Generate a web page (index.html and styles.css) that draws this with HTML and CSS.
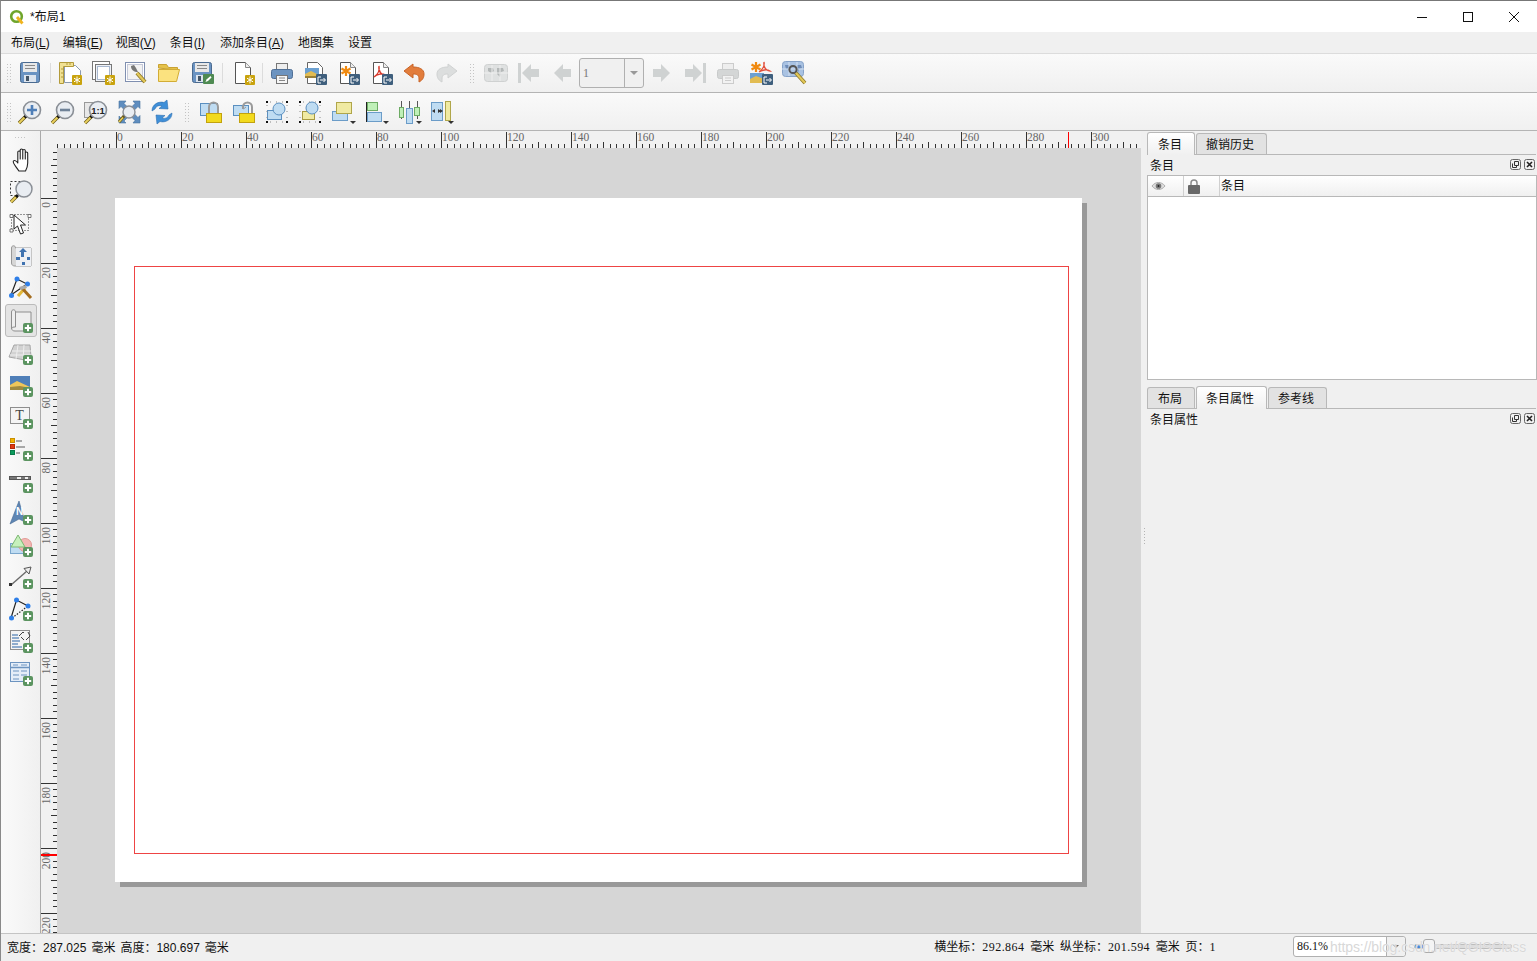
FILE: index.html
```html
<!DOCTYPE html>
<html lang="zh-CN">

<head>
    <meta charset="UTF-8">
    <title>*布局1</title>
    <link rel="stylesheet" href="styles.css">
</head>

<body>
    <svg class="defs" width="0" height="0">
        <!-- badges -->
        <symbol id="b-star" viewBox="0 0 26 26"><rect x="15" y="15" width="10" height="10" rx="1" fill="#c9a30e"/><path d="M20 16.5v7M17 18.2l6 3.6M23 18.2l-6 3.6" stroke="#fff" fill="none"/></symbol>
        <symbol id="b-export" viewBox="0 0 26 26"><rect x="14" y="14" width="11" height="11" rx="1" fill="#3f5f7d"/><path d="M19 17h-3v6h3M18 20h5M21.5 18l2 2-2 2" stroke="#fff" fill="none"/></symbol>
        <symbol id="b-plus" viewBox="0 0 26 26"><rect x="15" y="15" width="10" height="10" rx="2" fill="#5b9460"/><path d="M20 16.800v6.400M16.800 20h6.400" stroke="#fff" stroke-width="2"/></symbol>
        <symbol id="page" viewBox="0 0 26 26"><path d="M5.500 2.500h10l5 5v16h-15z" fill="#fff" stroke="#555"/><path d="M15.500 2.500v5h5" fill="#eee" stroke="#888"/></symbol>

        <!-- top toolbar -->
        <symbol id="i-save" viewBox="0 0 26 26"><rect x="3.500" y="2.500" width="19" height="20" rx="2" fill="#6a93c2" stroke="#4a6a8f"/><rect x="6" y="3" width="14" height="9" fill="#e8e8e8"/><path d="M8 5.500h10M8 8.500h10" stroke="#888"/><rect x="7" y="15" width="12" height="7" fill="#dce4ee"/><rect x="9" y="16" width="3" height="5" fill="#456"/></symbol>
        <symbol id="i-layout" viewBox="0 0 26 26"><path d="M7.500 5.500h11l5 5v12h-16z" fill="#fff" stroke="#8a9ab0"/><path d="M2.500 2.500h14v4h-10v17h-4z" fill="#f1e193" stroke="#b39b3b"/><path d="M4 9h2M4 13h2M4 17h2M10 3v2M13 3v2" stroke="#b39b3b"/><use href="#b-star"/></symbol>
        <symbol id="i-dup" viewBox="0 0 26 26"><rect x="2.500" y="1.500" width="17" height="18" fill="#fff" stroke="#777"/><rect x="5.500" y="4.500" width="16" height="17" fill="#eef1f7" stroke="#777"/><rect x="7.500" y="6.500" width="12" height="13" fill="#fff" stroke="#a8b8d0"/><use href="#b-star"/></symbol>
        <symbol id="i-manage" viewBox="0 0 26 26"><rect x="2.500" y="2.500" width="19" height="19" fill="#fff" stroke="#7f8fb0"/><rect x="4.500" y="4.500" width="15" height="15" fill="#f2f2f2" stroke="#c4c8d8"/><path d="M14 13l8 9" stroke="#8a7424" stroke-width="4"/><path d="M14 13l8 9" stroke="#e2c858" stroke-width="2.400"/><path d="M8 6c0 4 3 6 7 6l-2-4-2-3z" fill="#777"/></symbol>
        <symbol id="i-open" viewBox="0 0 26 26"><path d="M2.500 8V4.500h8l2 3h9V10z" fill="#e5c24a" stroke="#c9a233"/><path d="M2.500 9.500h21l-3 12h-18z" fill="#fbe27f" stroke="#d2ac35"/></symbol>
        <symbol id="i-saveas" viewBox="0 0 26 26"><use href="#i-save"/><rect x="14" y="14" width="11" height="10" rx="1" fill="#4e8a52"/><path d="M16.500 22l1-2.500 4-3.500 1 1.500-3.500 3.500z" fill="#fff"/></symbol>
        <symbol id="i-tmpl" viewBox="0 0 26 26"><use href="#page"/><use href="#b-star"/></symbol>
        <symbol id="i-print" viewBox="0 0 26 26"><rect x="7.500" y="3.500" width="11" height="7" fill="#eee" stroke="#777"/><rect x="2.500" y="9.500" width="21" height="9" rx="2" fill="#6d94c0" stroke="#4f6f96"/><rect x="7.500" y="15.500" width="11" height="8" fill="#f6f6f6" stroke="#777"/><path d="M10 18h6M10 20.500h6" stroke="#888"/></symbol>
        <symbol id="i-print-off" viewBox="0 0 26 26"><rect x="7.500" y="3.500" width="11" height="7" fill="#eee" stroke="#ccc"/><rect x="2.500" y="9.500" width="21" height="9" rx="2" fill="#d4d6d6" stroke="#c8caca"/><rect x="7.500" y="15.500" width="11" height="8" fill="#f2f2f2" stroke="#ccc"/><path d="M10 18h6M10 20.500h6" stroke="#ccc"/></symbol>
        <symbol id="i-expimg" viewBox="0 0 26 26"><path d="M5.500 2.500h10l5 5v16h-15z" fill="#fff" stroke="#666"/><rect x="3" y="8" width="14" height="10" fill="#6ca0d0"/><path d="M3 14l6-3 8 4v3H3z" fill="#e2bc52"/><path d="M3 16h14v2H3z" fill="#9a8038"/><use href="#b-export"/></symbol>
        <symbol id="i-expsvg" viewBox="0 0 26 26"><use href="#page"/><path d="M11 6v10M6.500 8.500l9 5M15.500 8.500l-9 5" stroke="#f08a10" stroke-width="2.200"/><use href="#b-export"/></symbol>
        <symbol id="i-exppdf" viewBox="0 0 26 26"><use href="#page"/><path d="M11 6c1 5-2 9-5 11 3-3 9-4 11-2-3 0-7-3-6-9z" fill="none" stroke="#d8392c" stroke-width="1.300"/><use href="#b-export"/></symbol>
        <symbol id="i-undo" viewBox="0 0 26 26"><path d="M12 4L3 11l9 7v-4c4 0 6 1 6 5v3c4-2 5-5 5-8 0-5-5-7-11-7z" fill="#e27d3c" stroke="#c96427"/></symbol>
        <symbol id="i-redo" viewBox="0 0 26 26"><path d="M14 4l9 7-9 7v-4c-4 0-6 1-6 5v3c-4-2-5-5-5-8 0-5 5-7 11-7z" fill="#dcdede" stroke="#d0d2d2"/></symbol>
        <symbol id="i-atlas-off" viewBox="0 0 26 26"><rect x="1.500" y="4.500" width="23" height="17" rx="3" fill="#dfe1e1" stroke="#cfd1d1"/><path d="M5 8h5l1 3-3 2-3-2zM14 8h6l1 3-3 1-1 5-3-3z" fill="#b4b8b8"/><path d="M1 13h24M9 5v16M17 5v16" stroke="#efefef"/></symbol>
        <symbol id="i-first" viewBox="0 0 26 26"><path d="M2 3h3v20H2z" fill="#cfd2d2"/><path d="M6 13l9-9v5h8v8h-8v5z" fill="#cfd2d2"/></symbol>
        <symbol id="i-prev" viewBox="0 0 26 26"><path d="M5 13l9-9v5h8v8h-8v5z" fill="#cfd2d2"/></symbol>
        <symbol id="i-next" viewBox="0 0 26 26"><path d="M21 13l-9-9v5H4v8h8v5z" fill="#cfd2d2"/></symbol>
        <symbol id="i-last" viewBox="0 0 26 26"><path d="M21 3h3v20h-3z" fill="#cfd2d2"/><path d="M20 13l-9-9v5H3v8h8v5z" fill="#cfd2d2"/></symbol>
        <symbol id="i-atlasexp" viewBox="0 0 26 26"><path d="M8 2v10M3.500 4.500l9 5M12.500 4.500l-9 5" stroke="#f08a10" stroke-width="2.200"/><path d="M16 2c1 5-2 8-5 10 3-2 8-3 11-1-3 0-7-3-6-9z" fill="none" stroke="#e2503c" stroke-width="1.300"/><rect x="2" y="13" width="14" height="10" fill="#6ca0d0"/><path d="M2 19l6-3 8 3v4H2z" fill="#e2bc52"/><use href="#b-export"/></symbol>
        <symbol id="i-atlasset" viewBox="0 0 26 26"><rect x="1.500" y="1.500" width="21" height="15" rx="3" fill="#a9c2e2" stroke="#86a2c8"/><path d="M4 5h4l1 3-4 1zM16 5h4l1 3-3 1-1 4-2-3z" fill="#6f8db8"/><path d="M1 9h22M8 2v14M16 2v14" stroke="#d2dff0"/><path d="M14 12l10 11" stroke="#8a7424" stroke-width="3.600"/><path d="M14 12l10 11" stroke="#e2c858" stroke-width="2.200"/><circle cx="12" cy="9.500" r="3.600" fill="none" stroke="#555" stroke-width="2"/></symbol>

        <!-- view toolbar -->
        <symbol id="lens" viewBox="0 0 26 26"><path d="M9 17l-7 7" stroke="#6a5a1a" stroke-width="3.400"/><path d="M8 18l-6 6" stroke="#e9cf5c" stroke-width="2"/><path d="M10 16l-2.500 2.500" stroke="#111" stroke-width="3"/><circle cx="15" cy="11" r="8.500" fill="#e9edf2" stroke="#8a8f96" stroke-width="1.600"/></symbol>
        <symbol id="i-zin" viewBox="0 0 26 26"><use href="#lens"/><path d="M15 6v10M10 11h10" stroke="#4f7fb8" stroke-width="2.600"/></symbol>
        <symbol id="i-zout" viewBox="0 0 26 26"><use href="#lens"/><path d="M10 11h10" stroke="#6f8298" stroke-width="2.600"/></symbol>
        <symbol id="i-zfull" viewBox="0 0 26 26"><path d="M3 2h7l-2 2.500 3 3-3 3-3-3L3 9.500zM24 2v7.500l-2-2-3 3-3-3 3-3L17 2zM24 24h-7l2-2.500-3-3 3-3 3 3 2-2zM3 24v-7l2 2 3-3 3 3-3 3 2 2z" fill="#5e8dbf" stroke="#46729f" stroke-width=".6"/><circle cx="13" cy="13" r="6" fill="#e9edf2" stroke="#8a8f96" stroke-width="1.400"/><path d="M8 17l-5 6" stroke="#6a5a1a" stroke-width="3"/><path d="M7 18.500l-4 4.500" stroke="#e9cf5c" stroke-width="1.600"/></symbol>
        <symbol id="i-refresh" viewBox="0 0 26 26"><path d="M3 12C3 5 10 2 15 3.500l3-2.500 1 9-9-.5 3-2.500c-3-1-6 0-7 3z" fill="#3f8fd8" stroke="#2e6fb0" stroke-width=".6"/><path d="M23 14c0 7-7 10-12 8.500l-3 2.500-1-9 9 .5-3 2.500c3 1 6 0 7-3z" fill="#3f8fd8" stroke="#2e6fb0" stroke-width=".6"/></symbol>
        <symbol id="i-lock" viewBox="0 0 26 26"><rect x="2.500" y="4.500" width="17" height="12" fill="#bfdcf2" stroke="#5a8fc0"/><path d="M11 15V8a4.500 4.500 0 0 1 9 0v7" fill="none" stroke="#9a9a9a" stroke-width="2"/><rect x="8.500" y="14.500" width="15" height="9" fill="#f2da1e" stroke="#c2a20e"/></symbol>
        <symbol id="i-unlock" viewBox="0 0 26 26"><rect x="2.500" y="6.500" width="15" height="10" fill="#bfdcf2" stroke="#5a8fc0"/><path d="M12 8a4.500 4.500 0 0 1 9 0v7M12 8v2" fill="none" stroke="#9a9a9a" stroke-width="2"/><path d="M11 7l1.500 3 2.500-2" fill="none" stroke="#9a9a9a"/><rect x="8.500" y="14.500" width="15" height="9" fill="#f2da1e" stroke="#c2a20e"/></symbol>
        <symbol id="i-group" viewBox="0 0 26 26"><rect x="3.500" y="11.500" width="14" height="9" fill="#bfdcf2" stroke="#5a8fc0"/><circle cx="15" cy="10" r="6" fill="#bfdcf2" stroke="#5a8fc0"/><path d="M2 2h2v2H2zM22 2h2v2h-2zM2 22h2v2H2zM22 22h2v2h-2z" fill="#111"/><path d="M6 3h14M3 6v14M6 23h14M23 6v14" stroke="#888" stroke-dasharray="1 5"/></symbol>
        <symbol id="i-ungroup" viewBox="0 0 26 26"><rect x="5.500" y="12.500" width="12" height="8" fill="#f0eaa2" stroke="#a89a40"/><circle cx="15" cy="9" r="6" fill="#bfdcf2" stroke="#5a8fc0"/><path d="M2 2h2v2H2zM22 2h2v2h-2zM2 22h2v2H2zM22 22h2v2h-2z" fill="#111"/><path d="M6 3h14M3 6v14M6 23h14M23 6v14" stroke="#888" stroke-dasharray="1 5"/></symbol>
        <symbol id="i-raise" viewBox="0 0 26 26"><rect x="2.500" y="12.500" width="15" height="9" fill="#bfdcf2" stroke="#6b9cc8"/><rect x="6.500" y="3.500" width="15" height="11" fill="#f0eaa2" stroke="#b0a64a"/><path d="M20 22h6l-3 3z" fill="#333"/></symbol>
        <symbol id="i-align" viewBox="0 0 26 26"><path d="M3.500 3v20" stroke="#222"/><rect x="4.500" y="3.500" width="10" height="8" fill="#bff0b8" stroke="#6dab64"/><rect x="4.500" y="13.500" width="14" height="9" fill="#bfdcf2" stroke="#6b9cc8"/><path d="M20 22h6l-3 3z" fill="#333"/></symbol>
        <symbol id="i-dist" viewBox="0 0 26 26"><path d="M5.500 2v18M13.500 2v20M21.500 2v18" stroke="#444" stroke-width=".9"/><rect x="3.500" y="8.500" width="4" height="10" fill="#bff0b8" stroke="#6dab64"/><rect x="10.500" y="9.500" width="6" height="15" fill="#bfdcf2" stroke="#6b9cc8"/><rect x="18.500" y="8.500" width="5" height="8" fill="#bff0b8" stroke="#6dab64"/><path d="M20 22h6l-3 3z" fill="#333"/></symbol>
        <symbol id="i-resize" viewBox="0 0 26 26"><rect x="2.500" y="3.500" width="11" height="18" fill="#bfdcf2" stroke="#6b9cc8"/><rect x="16.500" y="2.500" width="5" height="19" fill="#f0eaa2" stroke="#b0a64a"/><path d="M3 12l3-2v4zM12 12l-3-2v4zM14 12l-3-2v4z" fill="#333"/><path d="M19 22h6l-3 3z" fill="#333"/></symbol>

        <!-- left toolbar -->
        <symbol id="i-pan" viewBox="0 0 26 26"><path transform="translate(1 0) scale(1.1 1)" d="M9 24C6 19 3 16 4 14c1-1 3 0 4 2V5c0-1.500 2.200-1.500 2.200 0v7-9c0-1.500 2.300-1.500 2.300 0v9-8.500c0-1.500 2.300-1.500 2.300 0V12 6c0-1.500 2.200-1.500 2.200 0v10c0 3-1 6-2 8z" fill="#fff" stroke="#222" stroke-linejoin="round"/></symbol>
        <symbol id="i-zoomtool" viewBox="0 0 26 26"><rect x="2.500" y="2.500" width="14" height="14" fill="none" stroke="#333" stroke-dasharray="2 2"/><path d="M9 17l-6 6" stroke="#6a5a1a" stroke-width="3.400"/><path d="M8 18l-5 5" stroke="#e9cf5c" stroke-width="2"/><path d="M10 16l-2 2" stroke="#111" stroke-width="3"/><circle cx="16" cy="10" r="8" fill="#e9edf2" stroke="#8a8f96" stroke-width="1.500"/></symbol>
        <symbol id="i-select" viewBox="0 0 26 26"><rect x="3.500" y="3.500" width="17" height="16" fill="none" stroke="#333" stroke-dasharray="1 2"/><path d="M5 3.500h-3v3h3zM20 3.500h3v3h-3zM2 18h3v3H2z" fill="#fff" stroke="#555" stroke-width=".8"/><path d="M6 4v14l3.500-3 3 8 3-1-3-8h5z" fill="#fff" stroke="#222" stroke-linejoin="round"/></symbol>
        <symbol id="i-move" viewBox="0 0 26 26"><path d="M3.500 5c0-3 4-3 4 0h15.500v18H7c-2 0-3.500-1-3.500-3z" fill="#d6d6d6" stroke="#999"/><rect x="8" y="5" width="15" height="18" fill="#eef0f4"/><path d="M15 5l4 4h-3v5h-3V9h-2z" fill="#3f72b0"/><path d="M8 14h4v3H8zM19 14h3v3h-3zM14 19h3v3h-3z" fill="#3f72b0"/></symbol>
        <symbol id="i-nodes" viewBox="0 0 26 26"><path d="M3 20L9 4l10 5z" fill="none" stroke="#222" stroke-width="1.200"/><circle cx="3.500" cy="20.500" r="2.500" fill="#2f7fe8"/><circle cx="9" cy="4" r="2.500" fill="#2f7fe8"/><circle cx="19.500" cy="9" r="2.500" fill="#2f7fe8"/><path d="M10 21l7-8" stroke="#e2b83a" stroke-width="3"/><path d="M14 13l9 10" stroke="#a46c1e" stroke-width="3"/><path d="M11 12l7-2 1 3-6 2z" fill="#aaa"/></symbol>
        <symbol id="curl" viewBox="0 0 26 26"><path d="M3.500 4c0-3 4-3 4 0h15.500v19H7c-2 0-3.500-1-3.500-3z" fill="#eeeeee" stroke="#8e8e8e"/><path d="M7.500 4v15c-2 0-4 0-4 2" fill="none" stroke="#8e8e8e"/></symbol>
        <symbol id="i-addmap" viewBox="0 0 26 26"><use href="#curl"/><use href="#b-plus"/></symbol>
        <symbol id="i-add3d" viewBox="0 0 26 26"><path d="M1 17L6 5h16l1 12-6 3z" fill="#d2d2d2" stroke="#a6a6a6"/><path d="M4 11h19M2 15h21M10 5L8 19M16 5l-1 14" stroke="#eee"/><use href="#b-plus"/></symbol>
        <symbol id="i-addpic" viewBox="0 0 26 26"><rect x="2" y="4" width="20" height="14" fill="#4f7fb8"/><path d="M2 13l7-4 13 6v3H2z" fill="#efc65a"/><path d="M2 15l10-1 10 2v2H2z" fill="#a08a40"/><use href="#b-plus"/></symbol>
        <symbol id="i-legend" viewBox="0 0 26 26"><rect x="2.500" y="2.500" width="4" height="4" fill="#f5b400" stroke="#c88f00"/><rect x="2.500" y="8.500" width="4" height="4" fill="#e23b12" stroke="#b52a08"/><rect x="2.500" y="14.500" width="4" height="4" fill="#0a9a5c" stroke="#087a48"/><path d="M8 5h6M8 11h9M8 17h4" stroke="#a8a8a8" stroke-width="2"/><use href="#b-plus"/></symbol>
        <symbol id="i-scale" viewBox="0 0 26 26"><rect x="1.500" y="8.500" width="21" height="3" fill="#777" stroke="#555"/><path d="M9 10h4M17 10h3" stroke="#eee" stroke-width="2"/><use href="#b-plus"/></symbol>
        <symbol id="i-shape" viewBox="0 0 26 26"><rect x="2.500" y="11.500" width="15" height="10" fill="#bfdcf2" stroke="#7aa6cc"/><circle cx="17" cy="13" r="6.500" fill="#f2b8b4" stroke="#e29a96"/><path d="M10 3l7 12H3z" fill="#c6f0bc" stroke="#7cb872"/><use href="#b-plus"/></symbol>
        <symbol id="i-arrow" viewBox="0 0 26 26"><path d="M3 21L19 7" stroke="#6a6a6a" stroke-width="1.400"/><path d="M16 4.500L23 3l-2 7z" fill="#eee" stroke="#555"/><rect x="1" y="19" width="3" height="3" fill="#333"/><use href="#b-plus"/></symbol>
        <symbol id="i-addnode" viewBox="0 0 26 26"><path d="M3 22L8.500 4 20 10" fill="none" stroke="#222" stroke-width="1.200"/><path d="M4 22l16-12" stroke="#222" stroke-dasharray="1.500 1.500" stroke-width="1.200"/><circle cx="3.500" cy="22" r="2.500" fill="#2f7fe8"/><circle cx="8.500" cy="4" r="2.500" fill="#2f7fe8"/><circle cx="20" cy="10" r="2.500" fill="#2f7fe8"/><use href="#b-plus"/></symbol>
        <symbol id="i-html" viewBox="0 0 26 26"><rect x="2.500" y="2.500" width="19" height="19" fill="#f4f4f4" stroke="#8e8e8e"/><path d="M4 7h6M4 10h7M4 13h8M4 16h6M4 19h10" stroke="#6d94c0" stroke-width="1.500"/><path d="M11 8l4-4 1 1M20 4l2 4-4 4M13 9l3 3" fill="none" stroke="#444"/><use href="#b-plus"/></symbol>
        <symbol id="i-table" viewBox="0 0 26 26"><rect x="2.500" y="1.500" width="19" height="19" fill="#e4edf8" stroke="#6d94c0"/><path d="M3 6.500h18" stroke="#6d94c0" stroke-width="1.500"/><path d="M5 4h5M13 4h6M5 10h6M13 10h6M5 14h6M13 14h6M5 18h6" stroke="#6d94c0"/><use href="#b-plus"/></symbol>

        <!-- rulers -->
        <pattern id="ticks-h" width="65" height="17" x="75" patternUnits="userSpaceOnUse">
            <path d="M0 1h1v16H0zM6 13h1v4H6zM13 13h1v4h-1zM19 13h1v4h-1zM26 13h1v4h-1zM32 11h1v6h-1zM39 13h1v4h-1zM45 13h1v4h-1zM52 13h1v4h-1zM58 13h1v4h-1z" fill="#333"/>
        </pattern>
        <pattern id="ticks-v" width="16" height="65" y="50" patternUnits="userSpaceOnUse">
            <path d="M0 0h16v1H0zM12 6h4v1h-4zM12 13h4v1h-4zM12 19h4v1h-4zM12 26h4v1h-4zM10 32h6v1h-6zM12 39h4v1h-4zM12 45h4v1h-4zM12 52h4v1h-4zM12 58h4v1h-4z" fill="#333"/>
        </pattern>
    </svg>

    <div class="window">
        <header class="titlebar">
            <svg class="app-logo" width="16" height="16" viewBox="0 0 16 16">
                <circle cx="7.500" cy="7.500" r="5.300" fill="none" stroke="#6fa52b" stroke-width="2.600"/>
                <path d="M8 8l5.500 6.500" stroke="#f0b41e" stroke-width="2.800"/>
            </svg>
            <span class="title-text">*布局1</span>
            <div class="win-controls">
                <svg width="46" height="31" viewBox="0 0 46 31"><path d="M18 16.500h10" stroke="#111"/></svg>
                <svg width="46" height="31" viewBox="0 0 46 31"><rect x="18.500" y="11.500" width="9" height="9" fill="none" stroke="#111"/></svg>
                <svg width="46" height="31" viewBox="0 0 46 31"><path d="M18 11l10 10M28 11L18 21" stroke="#111" fill="none"/></svg>
            </div>
        </header>

        <nav class="menubar">
            <span class="menu-item tight">布局(<u>L</u>)</span>
            <span class="menu-item tight">编辑(<u>E</u>)</span>
            <span class="menu-item">视图(<u>V</u>)</span>
            <span class="menu-item loose">条目(<u>I</u>)</span>
            <span class="menu-item">添加条目(<u>A</u>)</span>
            <span class="menu-item">地图集</span>
            <span class="menu-item">设置</span>
        </nav>

        <div class="toolbar toolbar-main">
            <span class="grip"></span>
            <span class="tool"><svg><use href="#i-save"/></svg></span>
            <span class="sep"></span>
            <span class="tool"><svg><use href="#i-layout"/></svg></span>
            <span class="tool"><svg><use href="#i-dup"/></svg></span>
            <span class="tool"><svg><use href="#i-manage"/></svg></span>
            <span class="tool"><svg><use href="#i-open"/></svg></span>
            <span class="tool"><svg><use href="#i-saveas"/></svg></span>
            <span class="sep sep-wide"></span>
            <span class="tool"><svg><use href="#i-tmpl"/></svg></span>
            <span class="sep sep-narrow"></span>
            <span class="tool"><svg><use href="#i-print"/></svg></span>
            <span class="tool"><svg><use href="#i-expimg"/></svg></span>
            <span class="tool"><svg><use href="#i-expsvg"/></svg></span>
            <span class="tool"><svg><use href="#i-exppdf"/></svg></span>
            <span class="tool"><svg><use href="#i-undo"/></svg></span>
            <span class="tool"><svg><use href="#i-redo"/></svg></span>
            <span class="grip grip-wide"></span>
            <span class="tool"><svg><use href="#i-atlas-off"/></svg></span>
            <span class="tool"><svg><use href="#i-first"/></svg></span>
            <span class="tool"><svg><use href="#i-prev"/></svg></span>
            <div class="page-spin">
                <span class="page-spin-value">1</span>
                <span class="page-spin-arrow"></span>
            </div>
            <span class="tool"><svg><use href="#i-next"/></svg></span>
            <span class="tool"><svg><use href="#i-last"/></svg></span>
            <span class="tool"><svg><use href="#i-print-off"/></svg></span>
            <span class="tool"><svg><use href="#i-atlasexp"/></svg></span>
            <span class="tool"><svg><use href="#i-atlasset"/></svg></span>
        </div>

        <div class="toolbar toolbar-view">
            <span class="grip"></span>
            <span class="tool"><svg><use href="#i-zin"/></svg></span>
            <span class="tool"><svg><use href="#i-zout"/></svg></span>
            <span class="tool">
                <svg viewBox="0 0 26 26"><rect x="1.500" y="3.500" width="14" height="15" fill="#e8e8e8" stroke="#999"/><use href="#lens"/><text x="15" y="14.500" class="icon-text" text-anchor="middle">1:1</text></svg>
            </span>
            <span class="tool"><svg><use href="#i-zfull"/></svg></span>
            <span class="tool"><svg><use href="#i-refresh"/></svg></span>
            <span class="grip grip-wide"></span>
            <span class="tool"><svg><use href="#i-lock"/></svg></span>
            <span class="tool"><svg><use href="#i-unlock"/></svg></span>
            <span class="tool"><svg><use href="#i-group"/></svg></span>
            <span class="tool"><svg><use href="#i-ungroup"/></svg></span>
            <span class="tool"><svg><use href="#i-raise"/></svg></span>
            <span class="tool"><svg><use href="#i-align"/></svg></span>
            <span class="tool"><svg><use href="#i-dist"/></svg></span>
            <span class="tool"><svg><use href="#i-resize"/></svg></span>
        </div>

        <div class="workspace">
            <aside class="toolbox">
                <span class="grip-h"></span>
                <span class="box-tool"><svg><use href="#i-pan"/></svg></span>
                <span class="box-tool"><svg><use href="#i-zoomtool"/></svg></span>
                <span class="box-tool"><svg><use href="#i-select"/></svg></span>
                <span class="box-tool"><svg><use href="#i-move"/></svg></span>
                <span class="box-tool"><svg><use href="#i-nodes"/></svg></span>
                <span class="box-tool active"><svg><use href="#i-addmap"/></svg></span>
                <span class="box-tool"><svg><use href="#i-add3d"/></svg></span>
                <span class="box-tool"><svg><use href="#i-addpic"/></svg></span>
                <span class="box-tool">
                    <svg viewBox="0 0 26 26"><rect x="2.500" y="3.500" width="19" height="16" fill="#f4f4f4" stroke="#8e8e8e"/><text x="11.500" y="15.500" class="icon-label" text-anchor="middle">T</text><use href="#b-plus"/></svg>
                </span>
                <span class="box-tool"><svg><use href="#i-legend"/></svg></span>
                <span class="box-tool"><svg><use href="#i-scale"/></svg></span>
                <span class="box-tool">
                    <svg viewBox="0 0 26 26"><path d="M2 24L11 1l6 21-6-3z" fill="#5e86b4" stroke="#466a94" stroke-width=".6"/><text x="11.500" y="15" class="icon-north" text-anchor="middle">N</text><use href="#b-plus"/></svg>
                </span>
                <span class="box-tool"><svg><use href="#i-shape"/></svg></span>
                <span class="box-tool"><svg><use href="#i-arrow"/></svg></span>
                <span class="box-tool"><svg><use href="#i-addnode"/></svg></span>
                <span class="box-tool"><svg><use href="#i-html"/></svg></span>
                <span class="box-tool"><svg><use href="#i-table"/></svg></span>
            </aside>

            <section class="designer">
                <svg class="ruler-h" width="1100" height="17">
                    <rect x="16" width="1084" height="17" fill="url(#ticks-h)"/>
                    <rect x="1027" y="1" width="1" height="16" fill="#f00"/>
                    <g class="ruler-text" transform="translate(-1 -1)">
                        <text x="77" y="11">0</text><text x="142" y="11">20</text><text x="207" y="11">40</text>
                        <text x="272" y="11">60</text><text x="337" y="11">80</text><text x="402" y="11">100</text>
                        <text x="467" y="11">120</text><text x="532" y="11">140</text><text x="597" y="11">160</text>
                        <text x="662" y="11">180</text><text x="727" y="11">200</text><text x="792" y="11">220</text>
                        <text x="857" y="11">240</text><text x="922" y="11">260</text><text x="987" y="11">280</text>
                        <text x="1052" y="11">300</text>
                    </g>
                </svg>
                <div class="designer-body">
                    <svg class="ruler-v" width="16" height="785">
                        <rect width="16" height="785" fill="url(#ticks-v)"/>
                        <g class="ruler-text" text-anchor="end">
                            <text transform="translate(9 54) rotate(-90)">0</text>
                            <text transform="translate(9 119) rotate(-90)">20</text>
                            <text transform="translate(9 184) rotate(-90)">40</text>
                            <text transform="translate(9 249) rotate(-90)">60</text>
                            <text transform="translate(9 314) rotate(-90)">80</text>
                            <text transform="translate(9 379) rotate(-90)">100</text>
                            <text transform="translate(9 444) rotate(-90)">120</text>
                            <text transform="translate(9 509) rotate(-90)">140</text>
                            <text transform="translate(9 574) rotate(-90)">160</text>
                            <text transform="translate(9 639) rotate(-90)">180</text>
                            <text transform="translate(9 704) rotate(-90)">200</text>
                            <text transform="translate(9 769) rotate(-90)">220</text>
                        </g>
                        <rect y="706" width="16" height="2" fill="#f00"/>
                    </svg>
                    <div class="canvas">
                        <div class="sheet">
                            <div class="map-frame"></div>
                        </div>
                    </div>
                </div>
            </section>

            <aside class="dock">
                <span class="dock-handle"></span>
                <div class="tabs">
                    <span class="tab active">条目</span>
                    <span class="tab">撤销历史</span>
                </div>
                <div class="dock-title">
                    <span>条目</span>
                    <span class="dock-buttons">
                        <svg width="11" height="11" viewBox="0 0 11 11"><rect x=".5" y=".5" width="10" height="10" rx="2" fill="none" stroke="#666"/><path d="M4.500 2.500h4v4h-4zM2.500 4.500v4h4v-2" fill="none" stroke="#333"/></svg>
                        <svg width="11" height="11" viewBox="0 0 11 11"><rect x=".5" y=".5" width="10" height="10" rx="2" fill="none" stroke="#666"/><path d="M3 3l5 5M8 3L3 8" stroke="#222" stroke-width="1.600"/></svg>
                    </span>
                </div>
                <div class="tree">
                    <div class="tree-head">
                        <span class="tree-col">
                            <svg width="15" height="10" viewBox="0 0 16 10"><path d="M1 5c4-5 10-5 14 0-4 5-10 5-14 0z" fill="#ddd" stroke="#aaa"/><circle cx="8" cy="5" r="3" fill="#777"/><circle cx="8" cy="5" r="1" fill="#222"/></svg>
                        </span>
                        <span class="tree-col tree-col-lock">
                            <svg width="12" height="15" viewBox="0 0 12 15"><path d="M3 7V4a3 3 0 0 1 6 0v3" fill="none" stroke="#8a8a8a" stroke-width="1.500"/><rect y="6" width="12" height="9" rx="1" fill="#686868"/></svg>
                        </span>
                        <span class="tree-name">条目</span>
                    </div>
                    <div class="tree-body"></div>
                </div>
                <span class="splitter"></span>
                <div class="tabs">
                    <span class="tab">布局</span>
                    <span class="tab active">条目属性</span>
                    <span class="tab">参考线</span>
                </div>
                <div class="dock-title">
                    <span>条目属性</span>
                    <span class="dock-buttons">
                        <svg width="11" height="11" viewBox="0 0 11 11"><rect x=".5" y=".5" width="10" height="10" rx="2" fill="none" stroke="#666"/><path d="M4.500 2.500h4v4h-4zM2.500 4.500v4h4v-2" fill="none" stroke="#333"/></svg>
                        <svg width="11" height="11" viewBox="0 0 11 11"><rect x=".5" y=".5" width="10" height="10" rx="2" fill="none" stroke="#666"/><path d="M3 3l5 5M8 3L3 8" stroke="#222" stroke-width="1.600"/></svg>
                    </span>
                </div>
            </aside>
        </div>

        <footer class="statusbar">
            <span class="status-size">宽度：287.025 毫米 高度：180.697 毫米</span>
            <span class="status-pos">横坐标：<span class="digits">292.864</span> 毫米 纵坐标：<span class="digits">201.594</span> 毫米 页：<span class="digits">1</span></span>
            <div class="zoom-combo">
                <span class="zoom-value">86.1%</span>
                <span class="zoom-arrow"></span>
            </div>
            <div class="zoom-slider">
                <span class="slider-fill"></span>
                <span class="slider-thumb"></span>
            </div>
            <span class="watermark">https://blog.csdn.net/QGISClass</span>
        </footer>
    </div>
</body>

</html>
```

FILE: styles.css
```css
* {
    padding: 0;
    margin: 0;
    box-sizing: border-box;
}

html,
body {
    width: 1537px;
    height: 961px;
    overflow: hidden;
}

body {
    font-family: "Liberation Sans", "Noto Sans CJK SC", sans-serif;
    font-size: 12px;
    color: #111;
    background-color: #f0f0f0;
}

.defs {
    position: absolute;
}

.window {
    width: 1537px;
    height: 961px;
    display: flex;
    flex-direction: column;
    border-top: 1px solid #777;
    border-left: 1px solid #8a8a8a;
}

.titlebar {
    height: 31px;
    display: flex;
    align-items: center;
    background-color: #fff;
    padding-left: 8px;
}

.title-text {
    margin-left: 5px;
    margin-bottom: 2px;
}

.win-controls {
    margin-left: auto;
    display: flex;
}

.menubar {
    height: 22px;
    display: flex;
    align-items: center;
    padding: 0 0 2px 3px;
    background-color: #f0f0f0;
    border-bottom: 1px solid #dcdcdc;
}

.menu-item {
    padding: 0 7px;
    white-space: nowrap;
}

.menu-item.tight {
    padding-right: 6px;
}

.menu-item.loose {
    padding-right: 8px;
}

.toolbar {
    display: flex;
    align-items: center;
    background: linear-gradient(#fafafa, #f0f0f0);
    border-bottom: 1px solid #b4b4b4;
}

.toolbar-main {
    height: 39px;
}

.toolbar-view {
    height: 38px;
}

.grip {
    width: 6px;
    height: 20px;
    margin: 0 1.5px 0 5px;
    background-image: radial-gradient(#c4c4c4 0.7px, transparent 0.8px);
    background-size: 3px 3px;
}

.grip-wide {
    margin: 0 5px;
}

.sep {
    width: 7px;
    height: 20px;
    background: linear-gradient(#dcdcdc, #dcdcdc) no-repeat center / 1px 100%;
}

.sep-wide {
    width: 8px;
}

.sep-narrow {
    width: 6px;
}

.tool {
    width: 33px;
    height: 26px;
    display: flex;
    justify-content: center;
}

.tool svg,
.box-tool svg {
    width: 26px;
    height: 26px;
}

.page-spin {
    width: 65px;
    height: 30px;
    margin: 0 1px 0 0.5px;
    display: flex;
    border: 1px solid #b0b0b0;
    border-radius: 3px;
    background-color: #f0f0f0;
    color: #777;
    font-family: "Liberation Serif", serif;
    font-size: 12px;
}

.page-spin-value {
    width: 45px;
    padding-left: 3px;
    line-height: 28px;
    border-right: 1px solid #b0b0b0;
}

.page-spin-arrow {
    width: 0;
    height: 0;
    margin: 12px 0 0 5px;
    border-left: 4px solid transparent;
    border-right: 4px solid transparent;
    border-top: 4px solid #999;
}

.workspace {
    height: 802px;
    display: flex;
}

.toolbox {
    width: 40px;
    display: flex;
    flex-direction: column;
    background: linear-gradient(to right, #fafafa, #f0f0f0);
    border-right: 1px solid #aaa;
}

.grip-h {
    height: 13px;
    margin: 0 13px;
    background-image: radial-gradient(#c4c4c4 0.7px, transparent 0.8px);
    background-size: 3px 3px;
    background-position: 0 5px;
    background-repeat: repeat-x;
}

.box-tool {
    height: 32.1px;
    padding-left: 1px;
    display: flex;
    align-items: center;
    justify-content: center;
    flex-shrink: 0;
}

.box-tool.active {
    width: 32px;
    margin-left: 4px;
    padding-left: 0;
    background-color: #e4e4e4;
    border: 1px solid #bbb;
    border-radius: 3px;
}

.designer {
    width: 1100px;
    display: flex;
    flex-direction: column;
    background-color: #f1f1f1;
}

.ruler-h,
.ruler-v {
    display: block;
    flex-shrink: 0;
}

.ruler-text {
    font-family: "Liberation Serif", serif;
    font-size: 11.5px;
    fill: #666;
}

.designer-body {
    flex: 1;
    display: flex;
    min-height: 0;
}

.canvas {
    flex: 1;
    padding: 50px 0 0 58px;
    background-color: #d6d6d6;
}

.sheet {
    width: 967px;
    height: 684px;
    padding: 68px 13px 28px 19px;
    background-color: #fff;
    box-shadow: 5px 5px 0 #999;
}

.map-frame {
    height: 100%;
    border: 1px solid #e44;
}

.dock {
    position: relative;
    width: 395px;
    padding: 1px 0 0 6px;
    background-color: #f0f0f0;
}

.dock-handle {
    position: absolute;
    left: 2px;
    top: 396px;
    width: 3px;
    height: 18px;
    background-image: radial-gradient(#b4b4b4 0.7px, transparent 0.8px);
    background-size: 3px 3px;
}

.tabs {
    height: 23px;
    display: flex;
    align-items: flex-end;
    border-bottom: 1px solid #b8b8b8;
}

.tab {
    height: 21px;
    margin-right: 1px;
    padding: 0 12px 0 9px;
    line-height: 23px;
    background-color: #e2e2e2;
    border: 1px solid #b8b8b8;
    border-bottom: none;
    border-radius: 3px 3px 0 0;
    white-space: nowrap;
}

.tab:first-child {
    padding-left: 10px;
}

.tab.active {
    height: 23px;
    line-height: 24px;
    background: linear-gradient(#fff, #f0f0f0);
    margin-bottom: -1px;
}

.dock-title {
    height: 20px;
    display: flex;
    align-items: center;
    padding: 0 0 1px 3px;
}

.dock-buttons {
    margin-left: auto;
    display: flex;
    gap: 3px;
    margin-right: 1px;
}

.tree {
    width: 390px;
    border: 1px solid #b8b8b8;
}

.tree-head {
    height: 21px;
    display: flex;
    align-items: center;
    background: linear-gradient(#fff, #f0f0f0);
    border-bottom: 1px solid #b8b8b8;
}

.tree-col {
    width: 36px;
    height: 100%;
    padding-left: 3px;
    display: flex;
    align-items: center;
    border-right: 1px solid #d0d0d0;
}

.tree-col-lock {
    padding-left: 4px;
}

.tree-name {
    padding: 0 0 4px 1px;
}

.tree-body {
    height: 182px;
    background-color: #fff;
}

.splitter {
    display: block;
    width: 15px;
    height: 2px;
    margin: 1px 0 3px 188px;
    background-image: radial-gradient(#b4b4b4 0.6px, transparent 0.7px);
    background-size: 3px 2px;
}

.statusbar {
    position: relative;
    flex: 1;
    display: flex;
    align-items: center;
    padding: 0 25px 2px 6px;
    border-top: 1px solid #c4c4c4;
    background-color: #f0f0f0;
}

.status-size {
    margin-bottom: 1px;
    word-spacing: 1.7px;
}

.status-pos {
    margin: 0 77px 1px auto;
    word-spacing: 2.4px;
}

.digits {
    font-family: "Liberation Serif", serif;
    letter-spacing: 0.45px;
}

.zoom-combo {
    width: 113px;
    height: 21px;
    display: flex;
    background-color: #fff;
    border: 1px solid #b0b0b0;
    border-radius: 3px;
}

.zoom-value {
    width: 93px;
    padding-left: 3px;
    line-height: 19px;
    font-family: "Liberation Serif", serif;
    border-right: 1px solid #b0b0b0;
}

.zoom-arrow {
    width: 18px;
    display: flex;
    align-items: center;
    justify-content: center;
    background-color: #f0f0f0;
    border-radius: 0 3px 3px 0;
}

.zoom-arrow::after {
    content: "";
    border-left: 3px solid transparent;
    border-right: 3px solid transparent;
    border-top: 3px solid #666;
}

.zoom-slider {
    position: relative;
    width: 98px;
    height: 5px;
    margin-left: 8px;
    background-color: #dcdcdc;
    border: 1px solid #bbb;
    border-radius: 2px;
}

.slider-fill {
    position: absolute;
    left: 0;
    top: 0;
    width: 8px;
    height: 3px;
    background-color: #3f86d8;
}

.slider-thumb {
    position: absolute;
    left: 8px;
    top: -6px;
    width: 12px;
    height: 14px;
    background-color: #f4f4f4;
    border: 1px solid #aaa;
    border-radius: 3px;
}

.watermark {
    position: absolute;
    left: 1329px;
    top: 5px;
    font-size: 14px;
    letter-spacing: -0.1px;
    color: #d8d8d8;
    text-shadow: 0 0 1px #fff;
    white-space: nowrap;
}

.icon-text {
    font-family: "Liberation Sans", sans-serif;
    font-size: 9.5px;
    font-weight: bold;
    fill: #222;
}

.icon-label {
    font-family: "Liberation Serif", serif;
    font-size: 14px;
    fill: #444;
}

.icon-north {
    font-family: "Liberation Sans", sans-serif;
    font-size: 10px;
    font-weight: bold;
    fill: #fff;
}
```
